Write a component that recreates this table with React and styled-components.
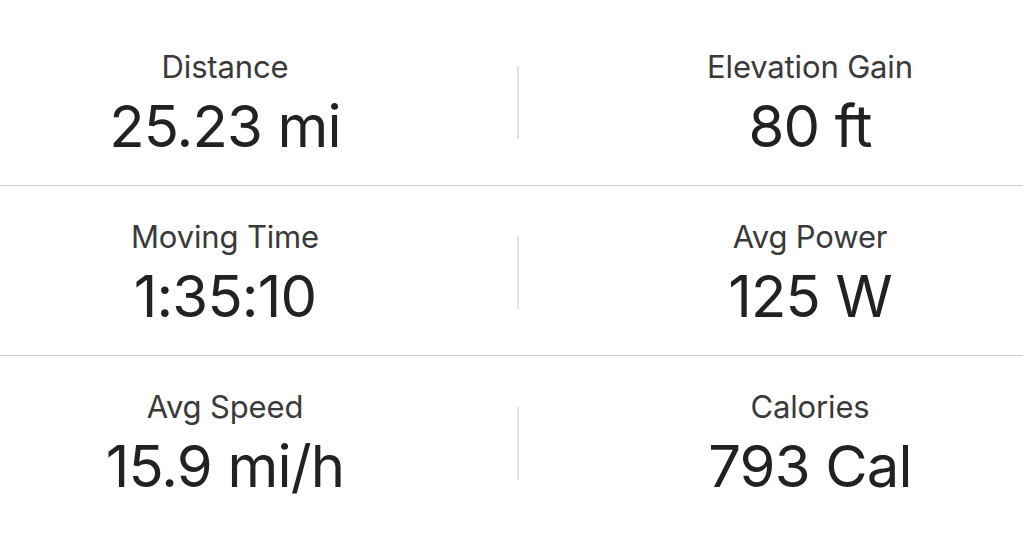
import React from "react";
import styled, { createGlobalStyle } from "styled-components";

const Global = createGlobalStyle`
  html, body { margin: 0; padding: 0; background: #fff; }
  body { font-family: Inter, "Noto Sans", sans-serif; }
`;

const Page = styled.div`
  width: 1023px;
  padding-top: 16px;
  background: #fff;
`;

const Row = styled.div`
  display: grid;
  grid-template-columns: 450px 67px 2px 78px 1fr;
  align-items: center;
  height: 170px;
  box-sizing: border-box;
  border-bottom: ${(p) => (p.$last ? "none" : "1px solid #cccccc")};
`;

const Cell = styled.div`
  grid-column: ${(p) => p.$col};
  display: flex;
  flex-direction: column;
  align-items: center;
  gap: 10px;
  padding-top: 4px;
`;

const Label = styled.div`
  font-size: 31px;
  line-height: 36px;
  color: #3a3a3a;
  letter-spacing: -0.15px;
`;

const Value = styled.div`
  font-size: 58px;
  line-height: 62px;
  color: #222;
  letter-spacing: -0.8px;
`;

const Divider = styled.div`
  grid-column: 3;
  width: 2px;
  height: 73px;
  margin-top: 4px;
  background: #e2e2e2;
`;

const rows = [
  [["Distance", "25.23 mi"], ["Elevation Gain", "80 ft"]],
  [["Moving Time", "1:35:10"], ["Avg Power", "125 W"]],
  [["Avg Speed", "15.9 mi/h"], ["Calories", "793 Cal"]],
];

export default function App() {
  return (
    <Page>
      <Global />
      {rows.map((r, i) => (
        <Row key={i} $last={i === rows.length - 1}>
          <Cell $col={1}>
            <Label>{r[0][0]}</Label>
            <Value>{r[0][1]}</Value>
          </Cell>
          <Divider />
          <Cell $col={5}>
            <Label>{r[1][0]}</Label>
            <Value>{r[1][1]}</Value>
          </Cell>
        </Row>
      ))}
    </Page>
  );
}
